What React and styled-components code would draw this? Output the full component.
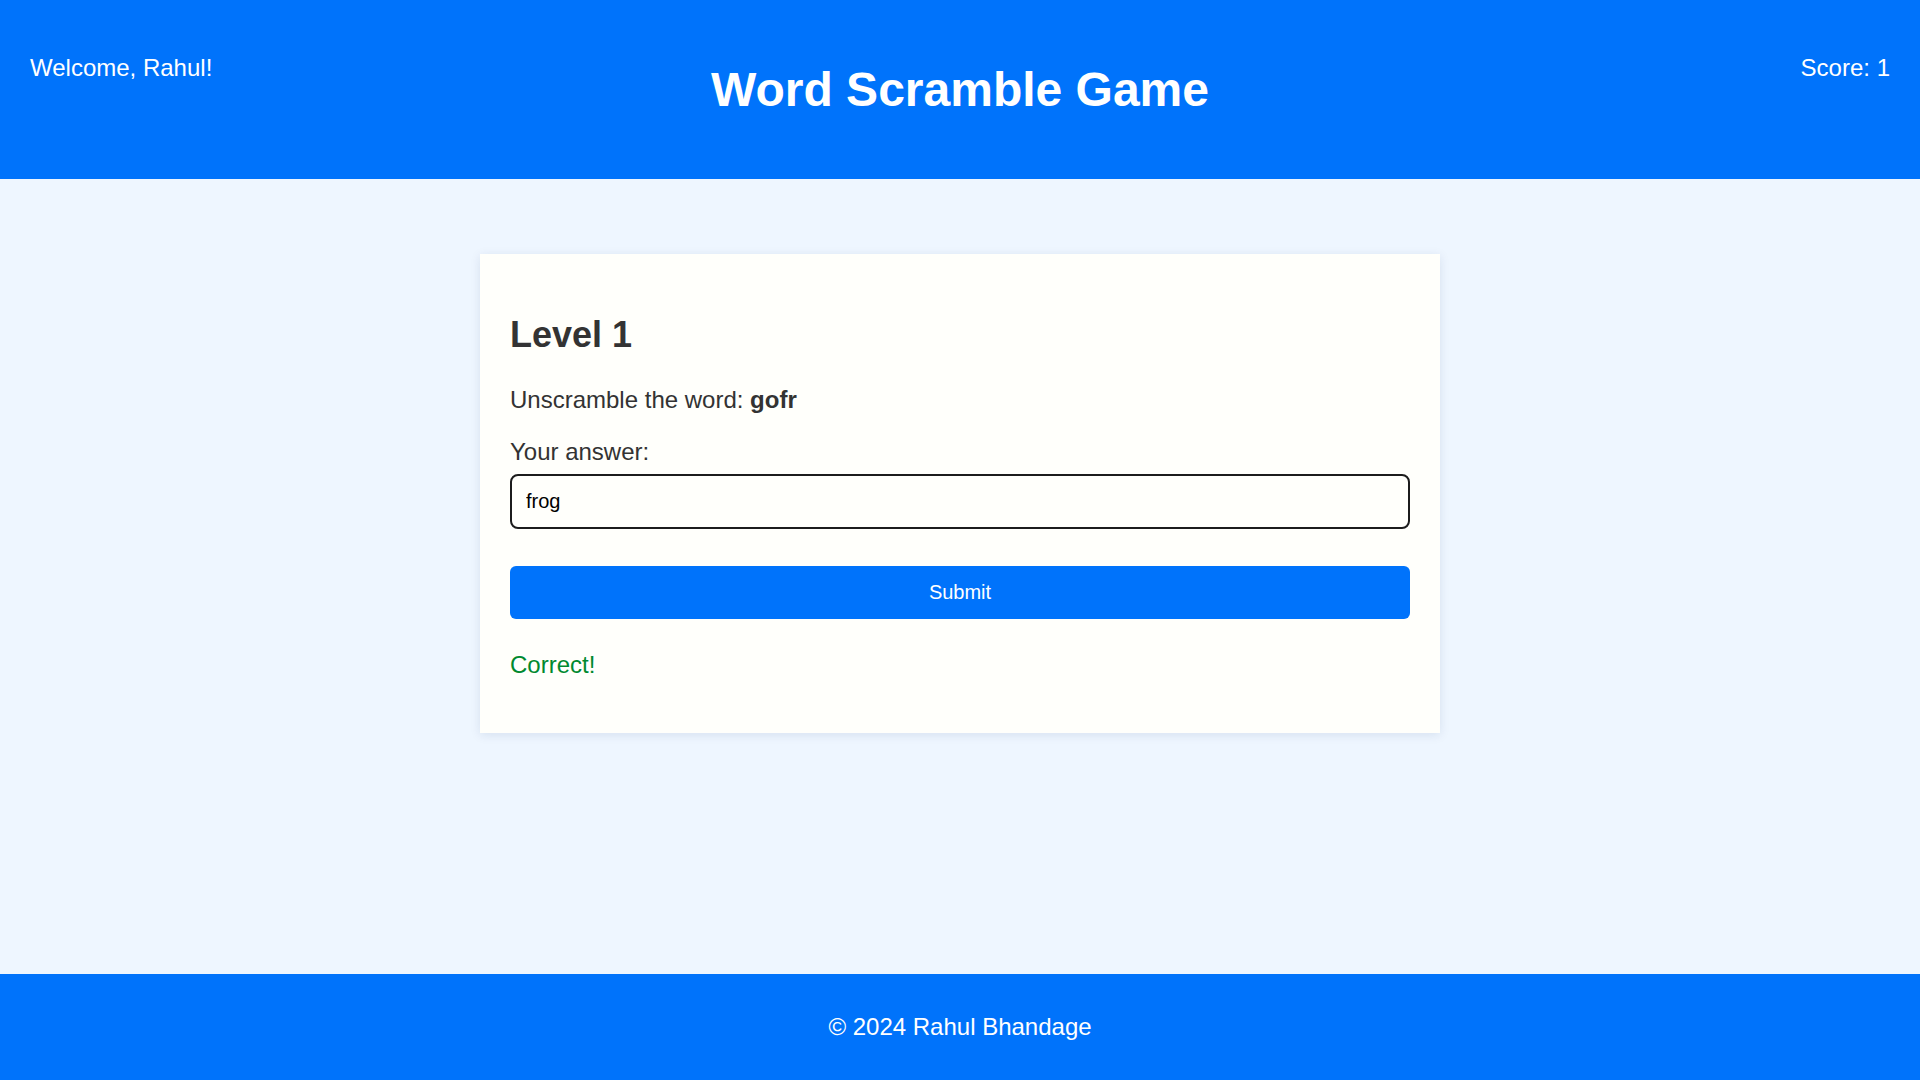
import React, { useState } from 'react'
import styled, { createGlobalStyle } from 'styled-components'

const GlobalStyle = createGlobalStyle`
  html, body, #root {
    margin: 0;
    padding: 0;
    height: 100%;
  }
  body {
    font-family: "Liberation Sans", Arial, sans-serif;
    background-color: #eef6ff;
    color: #333;
  }
`

const Page = styled.div`
  display: flex;
  flex-direction: column;
  min-height: 100vh;
`

const Header = styled.header`
  height: 179px;
  box-sizing: border-box;
  background-color: #0073fb;
  color: #fff;
  display: grid;
  grid-template-columns: 1fr auto 1fr;
  align-items: start;
  padding: 0 30px;
`

const HeaderText = styled.span`
  font-size: 24px;
  margin-top: 54px;
  justify-self: ${p => (p.$right ? 'end' : 'start')};
`

const Title = styled.h1`
  margin: 62px 0 0;
  font-size: 48px;
  font-weight: bold;
`

const Main = styled.main`
  flex: 1;
  display: flex;
  justify-content: center;
  align-items: flex-start;
  padding-top: 75px;
`

const Card = styled.section`
  width: 960px;
  box-sizing: border-box;
  background-color: #fffffb;
  padding: 30px;
  box-shadow: 0 2px 10px rgba(0, 40, 100, 0.1);
`

const Level = styled.h2`
  margin: 30px 0 30px;
  font-size: 36px;
  font-weight: bold;
  color: #333;
`

const Text = styled.p`
  margin: 0 0 24px;
  font-size: 24px;
  color: ${p => p.$color || '#333'};
`

const Label = styled.label`
  display: block;
  font-size: 24px;
  margin-bottom: 8px;
`

const Input = styled.input`
  display: block;
  width: 100%;
  box-sizing: border-box;
  height: 55px;
  padding: 0 14px;
  border: 2.5px solid #1c1c1c;
  border-radius: 8px;
  background: #fffffb;
  font-family: "Liberation Sans", Arial, sans-serif;
  font-size: 20px;
  color: #000;
  outline: none;
`

const Button = styled.button`
  display: block;
  width: 100%;
  height: 53px;
  margin: 37px 0 32px;
  border: none;
  border-radius: 6px;
  background-color: #0073fb;
  color: #fff;
  font-family: "Liberation Sans", Arial, sans-serif;
  font-size: 20px;
  cursor: pointer;
`

const Footer = styled.footer`
  height: 106px;
  background-color: #0073fb;
  color: #fff;
  font-size: 24px;
  display: flex;
  align-items: center;
  justify-content: center;
`

export default function App() {
  const [answer, setAnswer] = useState('frog')

  return (
    <>
      <GlobalStyle />
      <Page>
        <Header>
          <HeaderText>Welcome, Rahul!</HeaderText>
          <Title>Word Scramble Game</Title>
          <HeaderText $right>Score: 1</HeaderText>
        </Header>
        <Main>
          <Card>
            <Level>Level 1</Level>
            <Text>Unscramble the word: <b>gofr</b></Text>
            <Label htmlFor="answer">Your answer:</Label>
            <Input id="answer" value={answer} onChange={e => setAnswer(e.target.value)} />
            <Button>Submit</Button>
            <Text $color="#00892f">Correct!</Text>
          </Card>
        </Main>
        <Footer>© 2024 Rahul Bhandage</Footer>
      </Page>
    </>
  )
}
